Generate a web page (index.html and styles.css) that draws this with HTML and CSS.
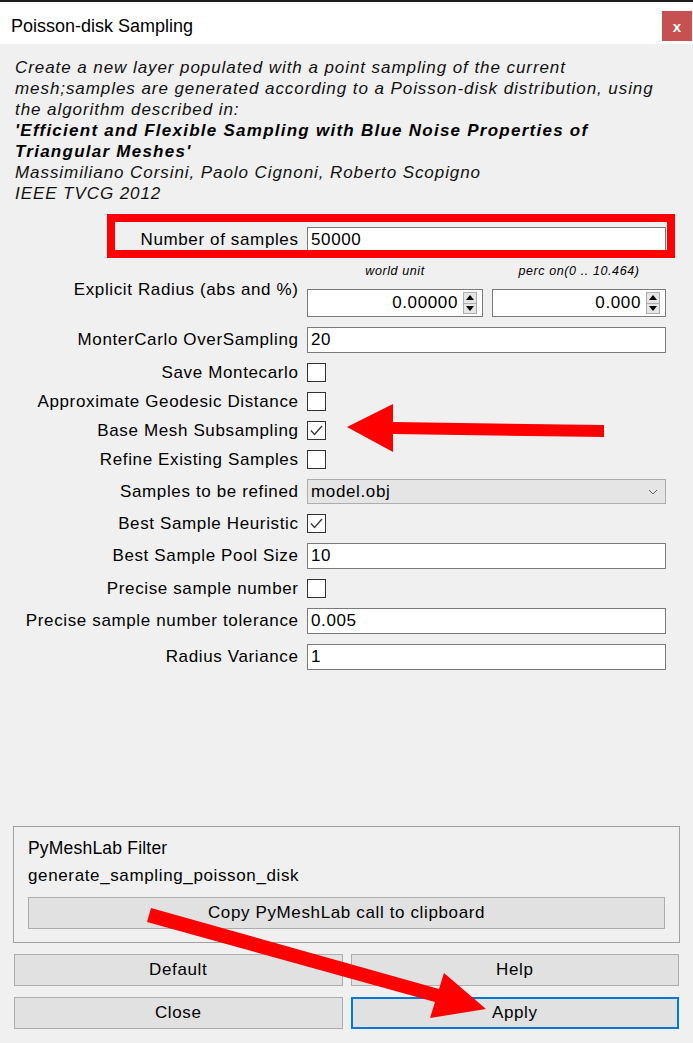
FILE: index.html
```html
<!DOCTYPE html>
<html>
<head>
<meta charset="utf-8">
<title>Poisson-disk Sampling</title>
<link rel="stylesheet" href="styles.css">
</head>
<body>
<div class="topline"></div>
<header class="titlebar">
  <span class="title">Poisson-disk Sampling</span>
  <span class="close">x</span>
</header>

<p class="desc">Create a new layer populated with a point sampling of the current<br>mesh;samples are generated according to a Poisson-disk distribution, using<br>the algorithm described in:<br><b>'Efficient and Flexible Sampling with Blue Noise Properties of<br>Triangular Meshes'</b><br>Massimiliano Corsini, Paolo Cignoni, Roberto Scopigno<br>IEEE TVCG 2012</p>

<div class="form">
  <div class="label">Number of samples</div>
  <div class="field"><div class="input">50000</div></div>

  <div class="label">Explicit Radius (abs and %)</div>
  <div class="field spins">
    <div class="caption">world unit</div>
    <div class="caption">perc on(0 .. 10.464)</div>
    <div class="spin"><span class="val">0.00000</span><span class="arrows"><span class="up"></span><span class="down"></span></span></div>
    <div class="spin"><span class="val">0.000</span><span class="arrows"><span class="up"></span><span class="down"></span></span></div>
  </div>

  <div class="label">MonterCarlo OverSampling</div>
  <div class="field"><div class="input">20</div></div>

  <div class="label">Save Montecarlo</div>
  <div class="field"><div class="check"></div></div>

  <div class="label">Approximate Geodesic Distance</div>
  <div class="field"><div class="check"></div></div>

  <div class="label">Base Mesh Subsampling</div>
  <div class="field"><div class="check"><svg viewBox="0 0 19 19" width="19" height="19"><polyline points="4,9.5 7.5,13.5 15,5" /></svg></div></div>

  <div class="label">Refine Existing Samples</div>
  <div class="field"><div class="check"></div></div>

  <div class="label">Samples to be refined</div>
  <div class="field"><div class="combo"><span>model.obj</span><svg viewBox="0 0 10 6" width="10" height="6"><polyline points="1,1 5,5 9,1" /></svg></div></div>

  <div class="label">Best Sample Heuristic</div>
  <div class="field"><div class="check"><svg viewBox="0 0 19 19" width="19" height="19"><polyline points="4,9.5 7.5,13.5 15,5" /></svg></div></div>

  <div class="label">Best Sample Pool Size</div>
  <div class="field"><div class="input">10</div></div>

  <div class="label">Precise sample number</div>
  <div class="field"><div class="check"></div></div>

  <div class="label">Precise sample number tolerance</div>
  <div class="field"><div class="input">0.005</div></div>

  <div class="label">Radius Variance</div>
  <div class="field"><div class="input">1</div></div>
</div>

<div class="spacer"></div>

<section class="group">
  <div class="group-title">PyMeshLab Filter</div>
  <div class="group-name">generate_sampling_poisson_disk</div>
  <div class="btn wide">Copy PyMeshLab call to clipboard</div>
</section>

<div class="buttons">
  <div class="btn">Default</div>
  <div class="btn">Help</div>
  <div class="btn">Close</div>
  <div class="btn primary">Apply</div>
</div>

<svg class="annot" viewBox="0 0 693 1043" width="693" height="1043">
  <rect x="111" y="218" width="560" height="36" fill="none" stroke="#ff0000" stroke-width="8"/>
  <polygon points="347,427 393,404 393,422 604,425 604,437 393,434 393,452" fill="#ff0000"/>
  <polygon points="151,908 439,989 444,973 486,1009 430,1018 435,1002 147,922" fill="#ff0000"/>
</svg>
</body>
</html>
```

FILE: styles.css
```css
html, body {
  margin: 0;
  padding: 0;
}
body {
  width: 693px;
  height: 1043px;
  background: #f0f0f0;
  font-family: "Liberation Sans", Arial, sans-serif;
  font-size: 17px;
  letter-spacing: 0.63px;
  color: #000;
  position: relative;
  overflow: hidden;
  display: flex;
  flex-direction: column;
}
.topline {
  height: 2px;
  background: #1b1b1b;
  flex: none;
}
.titlebar {
  height: 42px;
  background: #fff;
  display: flex;
  justify-content: space-between;
  align-items: flex-start;
  flex: none;
}
.title {
  font-size: 18px;
  letter-spacing: 0;
  margin: 14px 0 0 11px;
  line-height: 21px;
}
.close {
  width: 30px;
  height: 30px;
  margin: 9px 1px 0 0;
  background: #c75050;
  color: #fff;
  font-weight: bold;
  font-size: 15px;
  letter-spacing: 0;
  display: flex;
  align-items: center;
  justify-content: center;
}
.desc {
  margin: 13px 0 0 15px;
  font-style: italic;
  line-height: 21px;
  letter-spacing: 0.93px;
  color: #111;
  flex: none;
  white-space: nowrap;
}
.desc b {
  font-weight: bold;
  letter-spacing: 1.25px;
  color: #000;
}
.form {
  margin-top: 23px;
  display: grid;
  grid-template-columns: 298px 359px;
  column-gap: 9px;
  row-gap: 10px;
  flex: none;
}
.label {
  text-align: right;
  align-self: center;
  line-height: 18px;
  margin-right: -0.6px;
  white-space: nowrap;
}
.field {
  display: flex;
  align-items: center;
}
.input {
  box-sizing: border-box;
  width: 359px;
  height: 26px;
  background: #fff;
  border: 1px solid #7a7a7a;
  padding-left: 3px;
  line-height: 24px;
}
.spins {
  display: grid;
  grid-template-columns: 176px 174px;
  grid-template-rows: 26px 28px;
  column-gap: 9px;
}
.caption {
  font-size: 12.5px;
  font-style: italic;
  line-height: 16px;
  letter-spacing: 0.6px;
  text-align: center;
  align-self: start;
}
.spin {
  box-sizing: border-box;
  height: 28px;
  background: #fff;
  border: 1px solid #7a7a7a;
  display: flex;
  padding: 2px 5px 2px 2px;
}
.val {
  flex: 1;
  text-align: right;
  padding-right: 5px;
  line-height: 22px;
}
.arrows {
  width: 14px;
  display: flex;
  flex-direction: column;
}
.up, .down {
  flex: 1;
  background: #e5e5e5;
  border: 1px solid #adadad;
  display: flex;
  align-items: center;
  justify-content: center;
}
.down {
  border-top: none;
}
.up::after {
  content: "";
  border-left: 4px solid transparent;
  border-right: 4px solid transparent;
  border-bottom: 5px solid #000;
}
.down::after {
  content: "";
  border-left: 4px solid transparent;
  border-right: 4px solid transparent;
  border-top: 5px solid #000;
}
.check {
  box-sizing: border-box;
  width: 19px;
  height: 19px;
  background: #fff;
  border: 1px solid #333;
  position: relative;
}
.check svg {
  position: absolute;
  left: -1px;
  top: -1px;
  fill: none;
  stroke: #333;
  stroke-width: 1.3;
}
.combo {
  box-sizing: border-box;
  width: 359px;
  height: 25px;
  background: #e5e5e5;
  border: 1px solid #adadad;
  display: flex;
  align-items: center;
  justify-content: space-between;
  padding: 0 7px 0 3px;
}
.combo svg {
  fill: none;
  stroke: #606060;
  stroke-width: 1;
}
.spacer {
  flex: 1;
}
.group {
  flex: none;
  margin: 0 13px;
  border: 1px solid #a0a0a0;
  padding: 10px 14px 13px 14px;
  height: 117px;
  box-sizing: border-box;
}
.group-title {
  font-size: 17.5px;
  line-height: 22px;
  letter-spacing: 0.2px;
}
.group-name {
  margin-top: 6px;
  line-height: 22px;
}
.btn {
  box-sizing: border-box;
  height: 32px;
  background: #e1e1e1;
  border: 1px solid #adadad;
  display: flex;
  align-items: center;
  justify-content: center;
}
.btn.wide {
  margin-top: 10px;
}
.buttons {
  flex: none;
  margin: 11px 14px 14px 14px;
  display: grid;
  grid-template-columns: 1fr 1fr;
  column-gap: 8px;
  row-gap: 11px;
}
.btn.primary {
  border: 2px solid #0078d7;
}
.annot {
  position: absolute;
  left: 0;
  top: 0;
  pointer-events: none;
}
```
